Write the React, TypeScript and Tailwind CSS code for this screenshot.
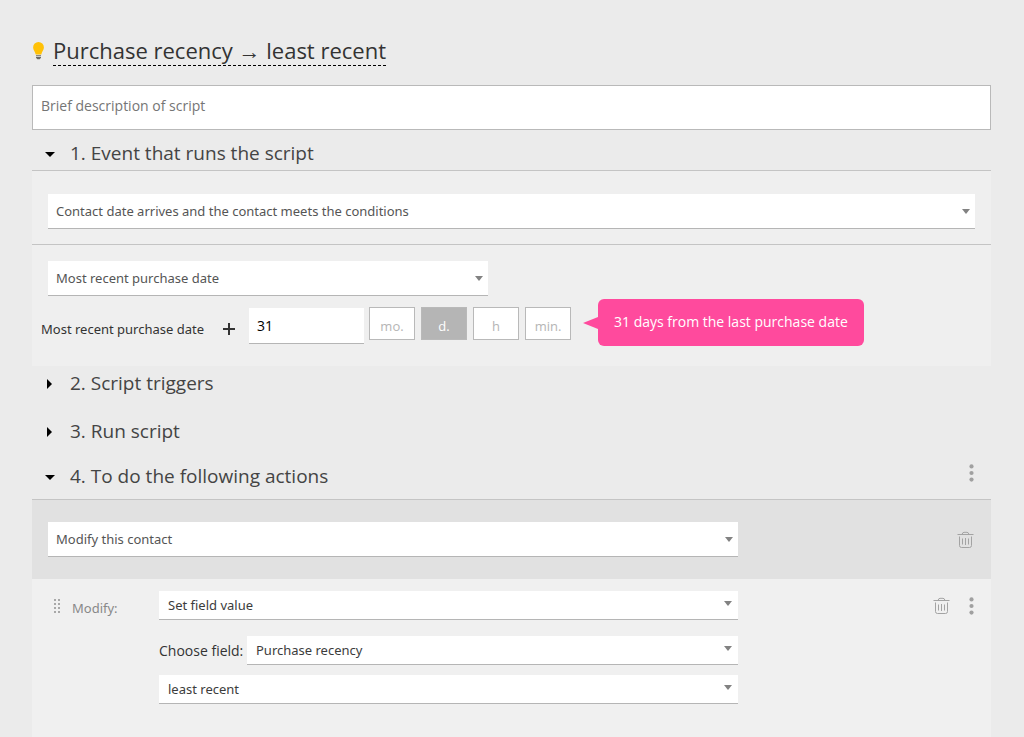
import { useState, type ReactNode, type SelectHTMLAttributes } from "react";
import clsx from "clsx";

type SelectProps = SelectHTMLAttributes<HTMLSelectElement> & {
    label: string
    options: string[]
    compact?: boolean
}

function SelectBox({ label, options, compact, className, ...rest }: SelectProps) {
    return (
        <div className={clsx("relative", className)}>
            <select
                aria-label={label}
                className={clsx(
                    "block w-full appearance-none border-b border-[#b5b5b5] bg-white pt-[2px] pr-8 font-['Noto_Sans',sans-serif] text-[13px] outline-none",
                    compact ? "h-[29px] pl-[9px] text-[#3c3c3c]" : "h-[35px] pl-2 text-[#555]"
                )}
                {...rest}
            >
                {options.map(option => (
                    <option key={option}>{option}</option>
                ))}
            </select>
            <svg
                viewBox="0 0 8 5"
                className={clsx(
                    "pointer-events-none absolute w-2 h-[5px]",
                    compact ? "right-[6px] top-[10px]" : "right-[5px] top-[15px]"
                )}
            >
                <path d="M0 0h8L4 5z" fill="#828282" />
            </svg>
        </div>
    )
}

function SectionTitle({ children, open, className }: { children: ReactNode, open?: boolean, className?: string }) {
    return (
        <h2 className={clsx("flex h-8 items-center", className)}>
            <button type="button" aria-expanded={!!open} className="flex items-center pl-3 text-[19px] leading-8 text-[#444]">
                <svg viewBox="0 0 12 12" className="mr-[14px] w-3 h-3">
                    {open ? <path d="M1 5h10L6 10z" /> : <path d="M3 2l5 5-5 5z" />}
                </svg>
                {children}
            </button>
        </h2>
    )
}

function TrashButton() {
    return (
        <button type="button" aria-label="Delete" className="block">
            <svg viewBox="0 0 18 18" className="w-[18px] h-[18px]" fill="none" stroke="#a3a3a3">
                <path d="M.500 3.500h16M5 3.500Q5.500 1.300 7 1.300h3Q11.500 1.300 12 3.500M2.500 5.500v9q0 2 2 2h8q2 0 2-2v-9M5.500 7.500v6M8.500 7v7M11.500 7.500v6" />
            </svg>
        </button>
    )
}

function MenuButton() {
    return (
        <button type="button" aria-label="More" className="block">
            <svg viewBox="0 0 6 18" className="w-[6px] h-[18px]" fill="#a0a0a0">
                <circle cx="3.500" cy="2.400" r="2.100" />
                <circle cx="3.500" cy="9" r="2.100" />
                <circle cx="3.500" cy="15.600" r="2.100" />
            </svg>
        </button>
    )
}

const units = ["mo.", "d.", "h", "min."]

export default function App() {
    const [unit, setUnit] = useState("d.")

    return (
        <main className="flex min-h-screen flex-col bg-[#ebebeb] pl-8 pr-[33px] pt-9 font-['Open_Sans','Noto_Sans',sans-serif]">
            <div className="flex items-start">
                <svg viewBox="0 0 13 18" className="mt-[6px] mr-2 w-[13px] h-[18px]">
                    <path d="M6.500 0A5.400 5.400 0 0 0 1.100 5.400c0 2.800 2 3.800 2.600 7.100h5.600c.6-3.300 2.600-4.300 2.600-7.100A5.400 5.400 0 0 0 6.500 0z" fill="#ffc107" />
                    <path d="M4 13.200h5v1.100H4zM4 15h5v.8l-1.300 1.400H5.300L4 15.800z" fill="#6b6b66" />
                </svg>
                <h1 className="h-[30px] border-b border-dashed border-black text-[22px] leading-7 text-[#333]">
                    Purchase recency → least recent
                </h1>
            </div>

            <textarea
                aria-label="Description"
                placeholder="Brief description of script"
                className="mt-[19px] block h-[45px] w-full resize-none border border-[#b9b9b9] bg-white px-2 py-[10px] text-sm leading-5 outline-none placeholder:text-[#757575]"
            />

            <SectionTitle open className="mt-[7px] mb-px">1. Event that runs the script</SectionTitle>
            <section className="border-t border-[#c4c4c4] bg-[#efefef]">
                <div className="border-b border-[#c4c4c4] px-4 pt-[23px] pb-[15px]">
                    <SelectBox label="Event" options={["Contact date arrives and the contact meets the conditions"]} />
                </div>
                <div className="px-4 pt-4">
                    <SelectBox label="Contact date" options={["Most recent purchase date"]} className="w-[440px]" />
                </div>
                <div className="flex items-center pt-[3px] pb-5 pl-[9px]">
                    <label htmlFor="offset" className="mt-3 w-[170px] font-['Noto_Sans',sans-serif] text-[13px] leading-5 whitespace-nowrap text-[#333]">
                        Most recent purchase date
                    </label>
                    <svg viewBox="0 0 12 12" className="mt-3 ml-3 w-3 h-3" stroke="#333" strokeWidth="2">
                        <path d="M6 0v12M0 6h12" />
                    </svg>
                    <input
                        id="offset"
                        defaultValue="31"
                        className="mt-[6px] ml-[14px] h-9 w-[115px] border-b border-[#b5b5b5] bg-white px-2 text-sm text-black outline-none"
                    />
                    <div className="mt-[2px] ml-[5px] flex gap-[6px]">
                        {units.map(u => (
                            <button
                                key={u}
                                type="button"
                                aria-pressed={u === unit}
                                onClick={() => setUnit(u)}
                                className={clsx(
                                    "h-[33px] w-[46px] border border-[#b9b9b9] pt-[6px] text-[13px]",
                                    u === unit ? "bg-[#b5b5b5] text-white" : "bg-white text-[#b5b5b5]"
                                )}
                            >
                                {u}
                            </button>
                        ))}
                    </div>
                    <svg viewBox="0 0 15 12" className="ml-3 w-[15px] h-3" fill="#ff4a9d">
                        <path d="M0 6L15 0v12z" />
                    </svg>
                    <p className="h-[47px] rounded-md bg-[#ff4a9d] px-4 text-sm leading-[46px] whitespace-nowrap text-white">
                        31 days from the last purchase date
                    </p>
                </div>
            </section>

            <SectionTitle className="mt-px">2. Script triggers</SectionTitle>
            <SectionTitle className="mt-4">3. Run script</SectionTitle>
            <div className="mt-[13px] mb-[7px] flex items-start justify-between pr-[17px]">
                <SectionTitle open>4. To do the following actions</SectionTitle>
                <div className="pt-1">
                    <MenuButton />
                </div>
            </div>

            <section className="flex flex-1 flex-col border-t border-[#c4c4c4] bg-[#f0f0f0]">
                <div className="flex items-center justify-between bg-[#e1e1e1] px-4 py-[22px]">
                    <SelectBox label="Action" options={["Modify this contact"]} className="w-[690px]" />
                    <TrashButton />
                </div>
                <div className="flex items-start pt-3 pl-[22px] pr-[17px] pb-8">
                    <svg viewBox="0 0 6 14" className="mt-2 w-[6px] h-[14px]" fill="#a8a8a8">
                        {[0, 4, 8, 12].map(y => (
                            <path key={y} d={`M0 ${y}h2v2H0zM4 ${y}h2v2H4z`} />
                        ))}
                    </svg>
                    <span className="mt-[7px] ml-3 w-[87px] font-['Noto_Sans',sans-serif] text-[13px] leading-5 text-[#888]">Modify:</span>
                    <div className="w-[579px]">
                        <SelectBox compact label="Modify" options={["Set field value"]} />
                        <div className="mt-4 mb-[10px] flex items-center">
                            <span className="w-[88px] text-sm text-[#333]">Choose field:</span>
                            <SelectBox compact label="Choose field" options={["Purchase recency"]} className="flex-1" />
                        </div>
                        <SelectBox compact label="Value" options={["least recent"]} />
                    </div>
                    <div className="mt-[6px] ml-auto flex items-center gap-[17px]">
                        <TrashButton />
                        <MenuButton />
                    </div>
                </div>
            </section>
        </main>
    )
}
